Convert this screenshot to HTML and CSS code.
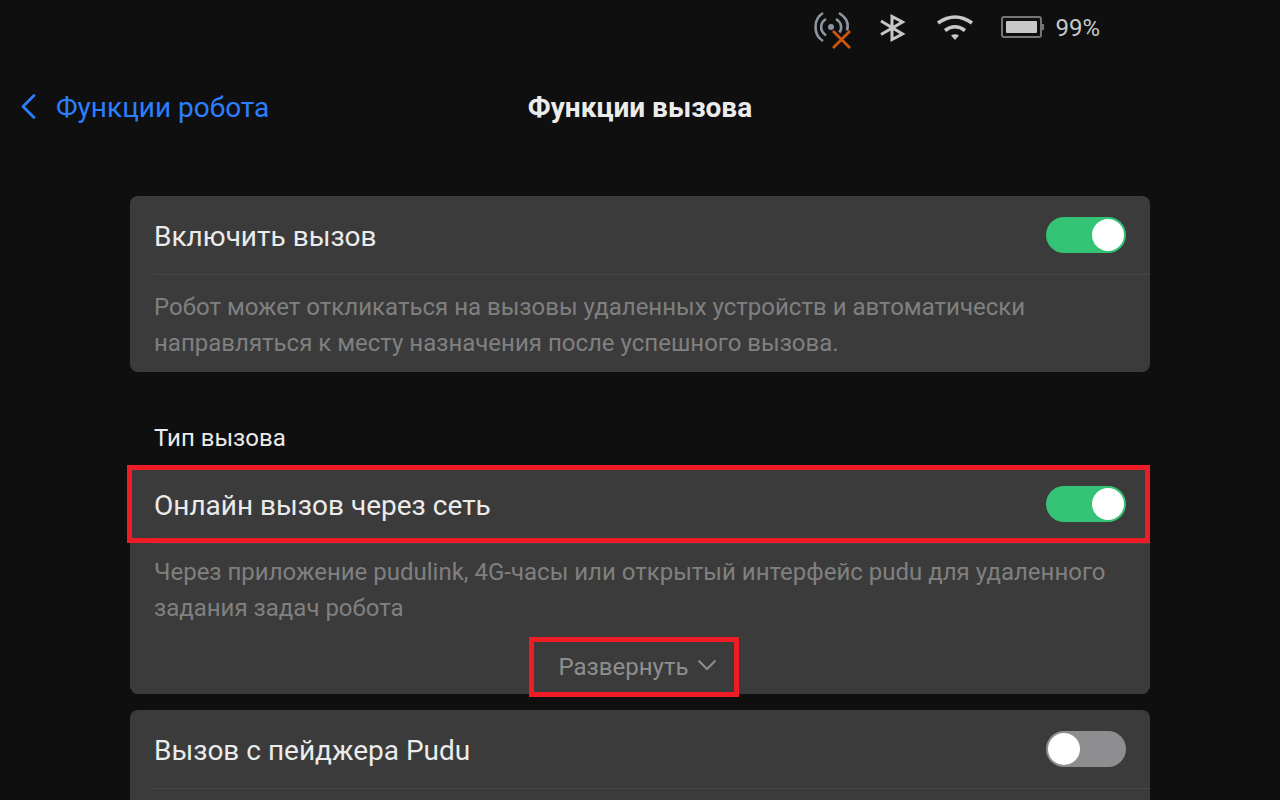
FILE: index.html
```
<!DOCTYPE html>
<html lang="ru">
<head>
<meta charset="utf-8">
<meta name="viewport" content="width=device-width, initial-scale=1">
<title>Функции вызова</title>
<link rel="stylesheet" href="styles.css">
</head>
<body>
<div class="screen">
  <div class="status">
    <svg class="status-signal" width="42" height="40" viewBox="0 0 42 40" fill="none" aria-hidden="true">
      <g stroke="#8d95a3" stroke-width="2.6">
        <path d="M12 5C2 11 2 27 12 33"/>
        <path d="M15 11C8.500 15 8.500 23 15 27.500"/>
        <path d="M25 11C30.500 14.500 31.500 20 28.500 24.500"/>
        <path d="M28 5C35.500 9.500 38 16 36 22.500"/>
      </g>
      <circle cx="20" cy="19" r="3" fill="#8d95a3"/>
      <path d="M22 23L39 40M39 23L22 40" stroke="#d0550f" stroke-width="2.800"/>
    </svg>
    <svg class="status-bluetooth" width="28" height="32" viewBox="0 0 28 32" fill="none" stroke="#c8c8c8" stroke-width="3" aria-hidden="true">
      <path d="M2 9L23.500 22L13 27.500V4.500L23.500 10L2 22.500"/>
    </svg>
    <svg class="status-wifi" width="40" height="32" viewBox="0 0 40 32" fill="none" stroke="#c8c8c8" aria-hidden="true">
      <path d="M3 11Q20 -1 37 11" stroke-width="3.600"/>
      <path d="M10 18.500Q20 11 30 18.500" stroke-width="3.600"/>
      <path d="M16 23.500Q20 21 24 23.500L20 28Z" fill="#c8c8c8" stroke="none"/>
    </svg>
    <svg class="status-battery" width="44" height="24" viewBox="0 0 44 24" fill="none" aria-hidden="true">
      <rect x="1" y="1" width="39" height="20" rx="2" stroke="#767676" stroke-width="2"/>
      <rect x="5" y="5" width="31" height="12" rx="1" fill="#c8c8c8"/>
      <rect x="41" y="8" width="2" height="6" fill="#767676"/>
    </svg>
    <span class="status-level">99%</span>
  </div>

  <header class="header">
    <a class="back" href="#">
      <svg width="16" height="28" viewBox="0 0 16 28" fill="none" stroke="#2b7fff" stroke-width="2.800" stroke-linecap="round" stroke-linejoin="round" aria-hidden="true">
        <path d="M14 1.500L3 12.500L14 23.500"/>
      </svg>
      Функции робота
    </a>
    <h1 class="title">Функции вызова</h1>
  </header>

  <main class="content">
    <section class="card">
      <div class="row">
        <label class="row-label" for="enable-call">Включить вызов</label>
        <input class="switch" type="checkbox" role="switch" id="enable-call" checked>
      </div>
      <p class="note">Робот может откликаться на вызовы удаленных устройств и автоматически направляться к месту назначения после успешного вызова.</p>
    </section>

    <h2 class="section-title">Тип вызова</h2>

    <section class="card">
      <div class="row marked marked-row">
        <label class="row-label" for="online-call">Онлайн вызов через сеть</label>
        <input class="switch" type="checkbox" role="switch" id="online-call" checked>
      </div>
      <p class="note note-expandable">Через приложение pudulink, 4G-часы или открытый интерфейс pudu для удаленного задания задач робота</p>
      <button class="expand marked marked-button" type="button">
        Развернуть
        <svg width="20" height="16" viewBox="0 0 20 16" fill="none" stroke="#8e8e8e" stroke-width="2" aria-hidden="true">
          <path d="M1.500 1.500L10 10L18.500 1.500"/>
        </svg>
      </button>
    </section>

    <section class="card card-next">
      <div class="row">
        <label class="row-label" for="pager-call">Вызов с пейджера Pudu</label>
        <input class="switch" type="checkbox" role="switch" id="pager-call">
      </div>
      <p class="note"></p>
    </section>
  </main>
</div>
</body>
</html>
```
FILE: styles.css
```
* {
  box-sizing: border-box;
}

body {
  margin: 0;
  background: #0f0f0f;
  color: #ebebeb;
  font-family: Roboto, "Noto Sans", sans-serif;
}

.screen {
  height: 100vh;
  overflow: hidden;
}

.status {
  display: flex;
  align-items: center;
  justify-content: flex-end;
  height: 56px;
  padding-right: 180px;
}

.status svg {
  flex: none;
  overflow: visible;
}

.status-signal {
  margin-right: 26px;
}

.status-bluetooth {
  margin-right: 28px;
}

.status-wifi {
  margin-right: 26px;
}

.status-battery {
  margin-right: 10px;
}

.status-level {
  color: #c8c8c8;
  font-size: 24px;
  line-height: 32px;
}

.header {
  display: grid;
  grid-template-columns: 1fr auto 1fr;
  align-items: center;
  height: 104px;
  padding: 0 20px;
}

.back {
  display: flex;
  align-items: center;
  gap: 20px;
  color: #2b7fff;
  font-size: 28px;
  line-height: 40px;
  text-decoration: none;
}

.title {
  margin: 0;
  font-size: 28px;
  font-weight: 700;
  line-height: 40px;
}

.content {
  max-width: 1020px;
  margin: 36px auto 0;
}

.card {
  border-radius: 8px;
  background: #3b3b3b;
}

.card-next {
  margin-top: 16px;
}

.row {
  display: flex;
  align-items: center;
  justify-content: space-between;
  height: 78px;
  padding: 0 24px;
}

.row-label {
  padding-top: 3px;
  font-size: 28px;
  line-height: 40px;
}

.note {
  margin: 0 0 0 24px;
  padding: 14px 24px 11px 0;
  border-top: 1px solid #474747;
  color: #808080;
  font-size: 24px;
  line-height: 36px;
}

.note-expandable {
  padding-top: 10px;
}

.section-title {
  margin: 0;
  padding: 48px 24px 9px;
  font-size: 24px;
  font-weight: 400;
  line-height: 36px;
}

.switch {
  appearance: none;
  flex: none;
  display: flex;
  width: 80px;
  height: 36px;
  margin: 0;
  padding: 2px;
  border-radius: 18px;
  background: #8e8e90;
}

.switch::before {
  content: "";
  width: 32px;
  height: 32px;
  border-radius: 50%;
  background: #fff;
}

.switch:checked {
  justify-content: flex-end;
  background: #34c374;
}

.expand {
  display: flex;
  align-items: center;
  justify-content: center;
  gap: 9px;
  width: 210px;
  height: 57px;
  margin: 0 auto;
  padding: 2px 4px 0 0;
  border: 0;
  background: none;
  color: #8e8e8e;
  font: inherit;
  font-size: 24px;
}

/* Red frames that call out a control */
.marked {
  position: relative;
}

.marked::after {
  content: "";
  position: absolute;
  border: 5px solid #ee1c25;
  pointer-events: none;
}

.marked-row::after {
  inset: 0 0 0 -3px;
}

.marked-button::after {
  inset: 0 6px -3px -6px;
}
```
